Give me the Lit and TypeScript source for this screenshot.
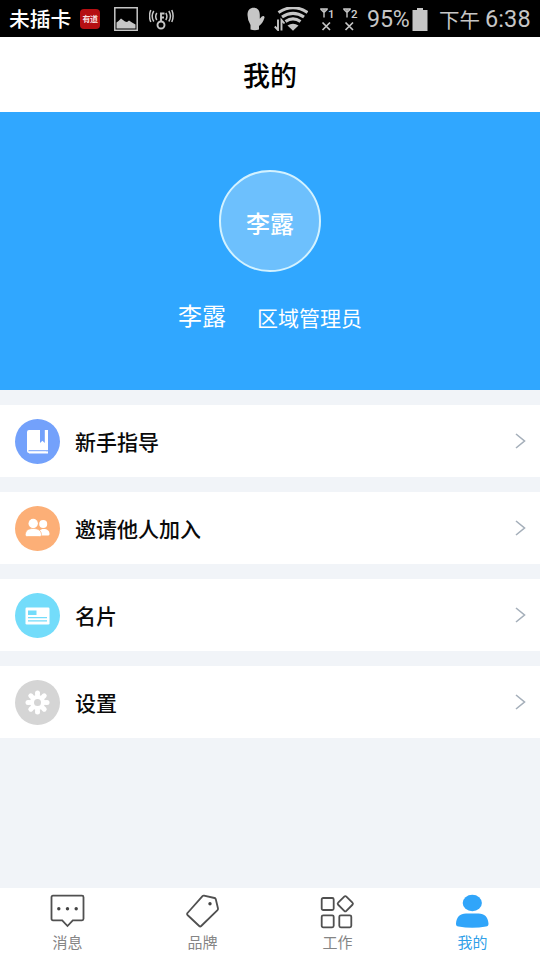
import { LitElement, html, css, svg } from "lit";
import { customElement, property } from "lit/decorators.js";
import { classMap } from "lit/directives/class-map.js";

const cjk = css`"Noto Sans CJK SC", sans-serif`;

@customElement("status-bar")
class StatusBar extends LitElement {
  static styles = css`
    :host { display: flex; align-items: center; box-sizing: border-box; height: 37px; padding: 1px 9px 0; background: #000; color: #c6c6c6; font-family: Roboto, ${cjk}; white-space: nowrap; }
    svg { display: block; flex: none; }
    .sim { color: #fff; font: 500 20.8px/28px ${cjk}; height: 30px; width: 71px; }
    .dict { box-sizing: border-box; width: 20px; height: 20px; border-radius: 4px; background: #b50f12; color: #f8dede; font: 700 8px/20px ${cjk}; text-align: center; margin-right: 14px; letter-spacing: -.5px; }
    .photo { margin-right: 11px; }
    .right { display: flex; align-items: center; margin-left: auto; }
    .hand { margin-right: 9px; }
    .wifi { margin-right: 12px; }
    .sig { margin-right: 8px; }
    .pct { font-size: 23.2px; line-height: 30px; width: 45px; margin-left: 1px; letter-spacing: -.1px; }
    .batt { margin-right: 11px; }
    .ampm { font: 400 20.5px/30px ${cjk}; width: 46px; }
    .time { font-size: 23.5px; line-height: 30px; width: 46px; letter-spacing: .1px; }
  `;

  signal(n: string) {
    return html`<svg class="sig" width="15" height="25" viewBox="0 0 15 25">
      <path d="M.8 2.200 4 5.500 7.200 2.200M.2 2h7.600M4 2v8.500" fill="none" stroke="#c6c6c6" stroke-width="1.400" />
      <text x="8" y="10.500" font-size="11.500" font-weight="500" fill="#d0d0d0" font-family="Roboto">${n}</text>
      <path d="m2.500 15.500 7.500 7.500m0-7.500-7.500 7.500" fill="none" stroke="#c6c6c6" stroke-width="1.700" />
    </svg>`;
  }

  render() {
    return html`
      <span class="sim">未插卡</span>
      <span class="dict">有道</span>
      <svg class="photo" width="24" height="24" viewBox="0 0 24 24">
        <path d="M.8.8h22.4v22.4H.8z" fill="none" stroke="#c6c6c6" stroke-width="1.5" />
        <path d="M2.500 21.500v-6l2-1.500 2.500-2.500 4 3 2 .5 2-1.500 3 2 3.500 2V21.500z" fill="#c6c6c6" />
      </svg>
      <svg width="25" height="22" viewBox="0 0 25 22" fill="none" stroke="#c6c6c6" stroke-width="1.900">
        <circle cx="12" cy="17" r="3.500" />
        <path d="M12 13.500V5.500h3.500M12 9.500h3" />
        <path d="M7.800 5q-2.200 3.500 0 7M4.800 3q-3.300 5 0 10.500M1.800 2q-2.600 6 0 12M16.800 5q2.200 3.500 0 7M19.800 3q3.300 5 0 10.500M22.800 2q2.600 6 0 12" stroke-width="1.500" />
      </svg>
      <div class="right">
        <svg class="hand" width="18" height="24" viewBox="0 0 18 24">
          <path d="M3.500 22.500V18Q.5 13.500.5 8C.5 3 3 .8 6.800.8c4 0 6.200 3 6 8v3l2-2.300c1.500-1.300 3.300 0 2.600 1.500-1 3.500-3 6.500-5.400 8v3.500Q8 24 3.500 22.500z" fill="#c6c6c6" />
        </svg>
        <svg class="wifi" width="34" height="24" viewBox="0 0 34 24" fill="none" stroke="#c6c6c6">
          <path d="M4.500 5.500Q19 -4 33.500 5.500M8 10q11-7.400 22 0M11.500 14.500q7.500-5.400 15 0" stroke-width="3.100" />
          <path d="m13.500 18.500q5.500-3.500 11 0L19 23.800z" fill="#c6c6c6" stroke="none" />
          <path d="M4 12.500v10.500L.8 19.500M7.500 23.500V13l3 3.500" stroke-width="1.900" />
        </svg>
        ${this.signal("1")}${this.signal("2")}
        <span class="pct">95%</span>
        <svg class="batt" width="16" height="24" viewBox="0 0 16 24"><path d="M5 1h6v2h4.500V24H.5V3H5z" fill="#c6c6c6" /></svg>
        <span class="ampm">下午</span><span class="time">6:38</span>
      </div>
    `;
  }
}

const menuIcons: Record<string, unknown> = {
  guide: svg`<circle cx="22.500" cy="22.500" r="22.500" fill="#73a1fb" />
    <path d="M14 11h19v21.500h-2V34H14q-2 0-2-2V13q0-2 2-2z" fill="#fff" />
    <path d="M25 10.500h4.800v13.500l-2.400-2.300-2.400 2.300z" fill="#73a1fb" />
    <path d="M13.500 31.800H33" stroke="#73a1fb" stroke-width="1.200" />
    <path d="M13.500 32.400H33V34.500H14z" fill="#fff" />`,
  invite: svg`<circle cx="22.500" cy="22.500" r="22.500" fill="#fcaf77" />
    <circle cx="28.200" cy="18" r="4" fill="#fff" />
    <path d="M24 29.500c-.5-4 1-6.500 4.500-6.500 4 0 6 2 6 5 0 1.200-.8 1.500-2 1.500z" fill="#fff" />
    <circle cx="18.200" cy="17.500" r="5.500" fill="#fcaf77" />
    <circle cx="18.200" cy="17.500" r="4.700" fill="#fff" />
    <path d="M10.300 28.500c.3-4 3-6 7.900-6s8 2 8.300 6c0 1.600-.8 2-2 2H12.300c-1.200 0-2-.4-2-2z" fill="#fff" stroke="#fcaf77" stroke-width=".7" />`,
  card: svg`<circle cx="22.500" cy="22.500" r="22.500" fill="#73dcfa" />
    <rect x="10.500" y="14.500" width="24" height="17" rx="1.200" fill="#fff" />
    <path d="M13 17.500h8.500v4.500H13zM13 24h19v1.300H13zM13 27.200h19v1.300H13z" fill="#73dcfa" />`,
  settings: svg`<circle cx="22.500" cy="22.500" r="22.500" fill="#d5d5d5" />
    <g transform="translate(22.500 22.500)" fill="#fff">
      <circle r="7.500" />
      ${[0, 45, 90, 135, 180, 225, 270, 315].map(
        (a) => svg`<path d="M-2.200-5.500-2.500-9.500Q-2.500-12 0-12T2.500-9.500L2.200-5.500z" transform="rotate(${a})" />`,
      )}
      <circle r="3.500" fill="#d5d5d5" />
    </g>`,
};

@customElement("menu-row")
class MenuRow extends LitElement {
  @property() icon = "";
  @property() label = "";
  static styles = css`
    :host { display: flex; align-items: center; height: 72px; padding: 0 14px 0 15px; background: #fff; }
    svg { display: block; flex: none; }
    .label { flex: 1; margin: 0 0 0 15px; color: #0a0a0a; font: 500 21px/30px ${cjk}; }
  `;
  render() {
    return html`
      <svg width="45" height="45" viewBox="0 0 45 45">${menuIcons[this.icon]}</svg>
      <span class="label">${this.label}</span>
      <svg width="11" height="16" viewBox="0 0 11 16"><path d="m1 1 8.500 7L1 15" fill="none" stroke="#a5afba" stroke-width="1.600" /></svg>
    `;
  }
}

const tabIcons: Record<string, unknown> = {
  chat: svg`<path d="M3 1.700h29q1.500 0 1.500 1.500v21.600q0 1.500-1.500 1.500h-9.200L17.500 32l-5.300-5.700H3q-1.500 0-1.500-1.500V3.200q0-1.500 1.500-1.500z" />
    <g fill="#444" stroke="none"><circle cx="8.800" cy="14.700" r="1.700" /><circle cx="17.500" cy="14.700" r="1.700" /><circle cx="26.200" cy="14.700" r="1.700" /></g>`,
  tag: svg`<path d="M19 1.700 29.500 4q1 .2 1.300 1.200L33 14.500q.2 1-.5 1.700L16.200 32q-1 1-2 0L2.500 21q-1-1 0-2L17.500 2.200q.6-.7 1.500-.5z" />
    <circle cx="25" cy="9.800" r="1.700" fill="#444" stroke="none" />`,
  work: svg`<rect x="1.700" y="4" width="12" height="12" rx="1.500" /><rect x="1.700" y="21.300" width="12" height="12" rx="1.500" />
    <rect x="19.300" y="21.300" width="12" height="12" rx="1.500" /><rect x="19.500" y="3.900" width="11.600" height="11.600" rx="1.500" transform="rotate(45 25.300 9.700)" />`,
  me: svg`<g fill="#30a5fa" stroke="none"><ellipse cx="17.300" cy="9" rx="9.600" ry="8.300" />
    <path d="M1 29.500C1.500 23 5 19.500 11 19.500h12.500c6 0 9.500 3.500 10 10 .1 2-.8 2.700-2.500 3-9 1.700-18.500 1.700-27.500 0-1.700-.3-2.600-1-2.500-3z" /></g>`,
};

@customElement("tab-item")
class TabItem extends LitElement {
  @property() icon = "";
  @property() label = "";
  @property({ type: Boolean }) active = false;
  static styles = css`
    :host { display: block; flex: 1; }
    .tab { display: flex; flex-direction: column; align-items: center; padding-top: 6px; color: #858585; font: 400 15px/22px ${cjk}; }
    .active { color: #2fa0e8; }
    svg { display: block; fill: none; stroke: #505050; stroke-width: 1.8; margin-bottom: 2px; }
  `;
  render() {
    return html`<div class=${classMap({ tab: true, active: this.active })}>
      <svg width="35" height="35" viewBox="0 0 35 35">${tabIcons[this.icon]}</svg>
      <span>${this.label}</span>
    </div>`;
  }
}

@customElement("app-root")
class AppRoot extends LitElement {
  static styles = css`
    :host { display: flex; flex-direction: column; height: 960px; width: 540px; overflow: hidden; background: #f1f4f8; font-family: ${cjk}; }
    .title { flex: none; height: 75px; margin: 0; background: #fff; color: #000; text-align: center; font-size: 27px; font-weight: 500; line-height: 75px; }
    .profile { flex: none; box-sizing: border-box; height: 278px; padding-top: 58px; display: flex; flex-direction: column; align-items: center; background: #30a7ff; color: #fff; }
    .avatar { box-sizing: border-box; width: 102px; height: 102px; border: 2px solid #d3f2ff; border-radius: 50%; background: #6dc0fd; font-size: 24px; line-height: 102px; text-align: center; font-weight: 500; }
    .who { display: flex; gap: 31px; align-items: flex-start; margin-top: 25px; }
    .name { font-size: 24px; line-height: 36px; }
    .role { font-size: 21px; line-height: 36px; padding-top: 2px; }
    .menu { flex: 1; display: flex; flex-direction: column; gap: 15px; padding-top: 15px; }
    .tabs { flex: none; height: 72px; display: flex; background: #fff; }
  `;
  render() {
    return html`
      <status-bar></status-bar>
      <h1 class="title">我的</h1>
      <section class="profile">
        <div class="avatar">李露</div>
        <div class="who"><span class="name">李露</span><span class="role">区域管理员</span></div>
      </section>
      <main class="menu">
        <menu-row icon="guide" label="新手指导"></menu-row>
        <menu-row icon="invite" label="邀请他人加入"></menu-row>
        <menu-row icon="card" label="名片"></menu-row>
        <menu-row icon="settings" label="设置"></menu-row>
      </main>
      <nav class="tabs">
        <tab-item icon="chat" label="消息"></tab-item>
        <tab-item icon="tag" label="品牌"></tab-item>
        <tab-item icon="work" label="工作"></tab-item>
        <tab-item icon="me" label="我的" active></tab-item>
      </nav>
    `;
  }
}
